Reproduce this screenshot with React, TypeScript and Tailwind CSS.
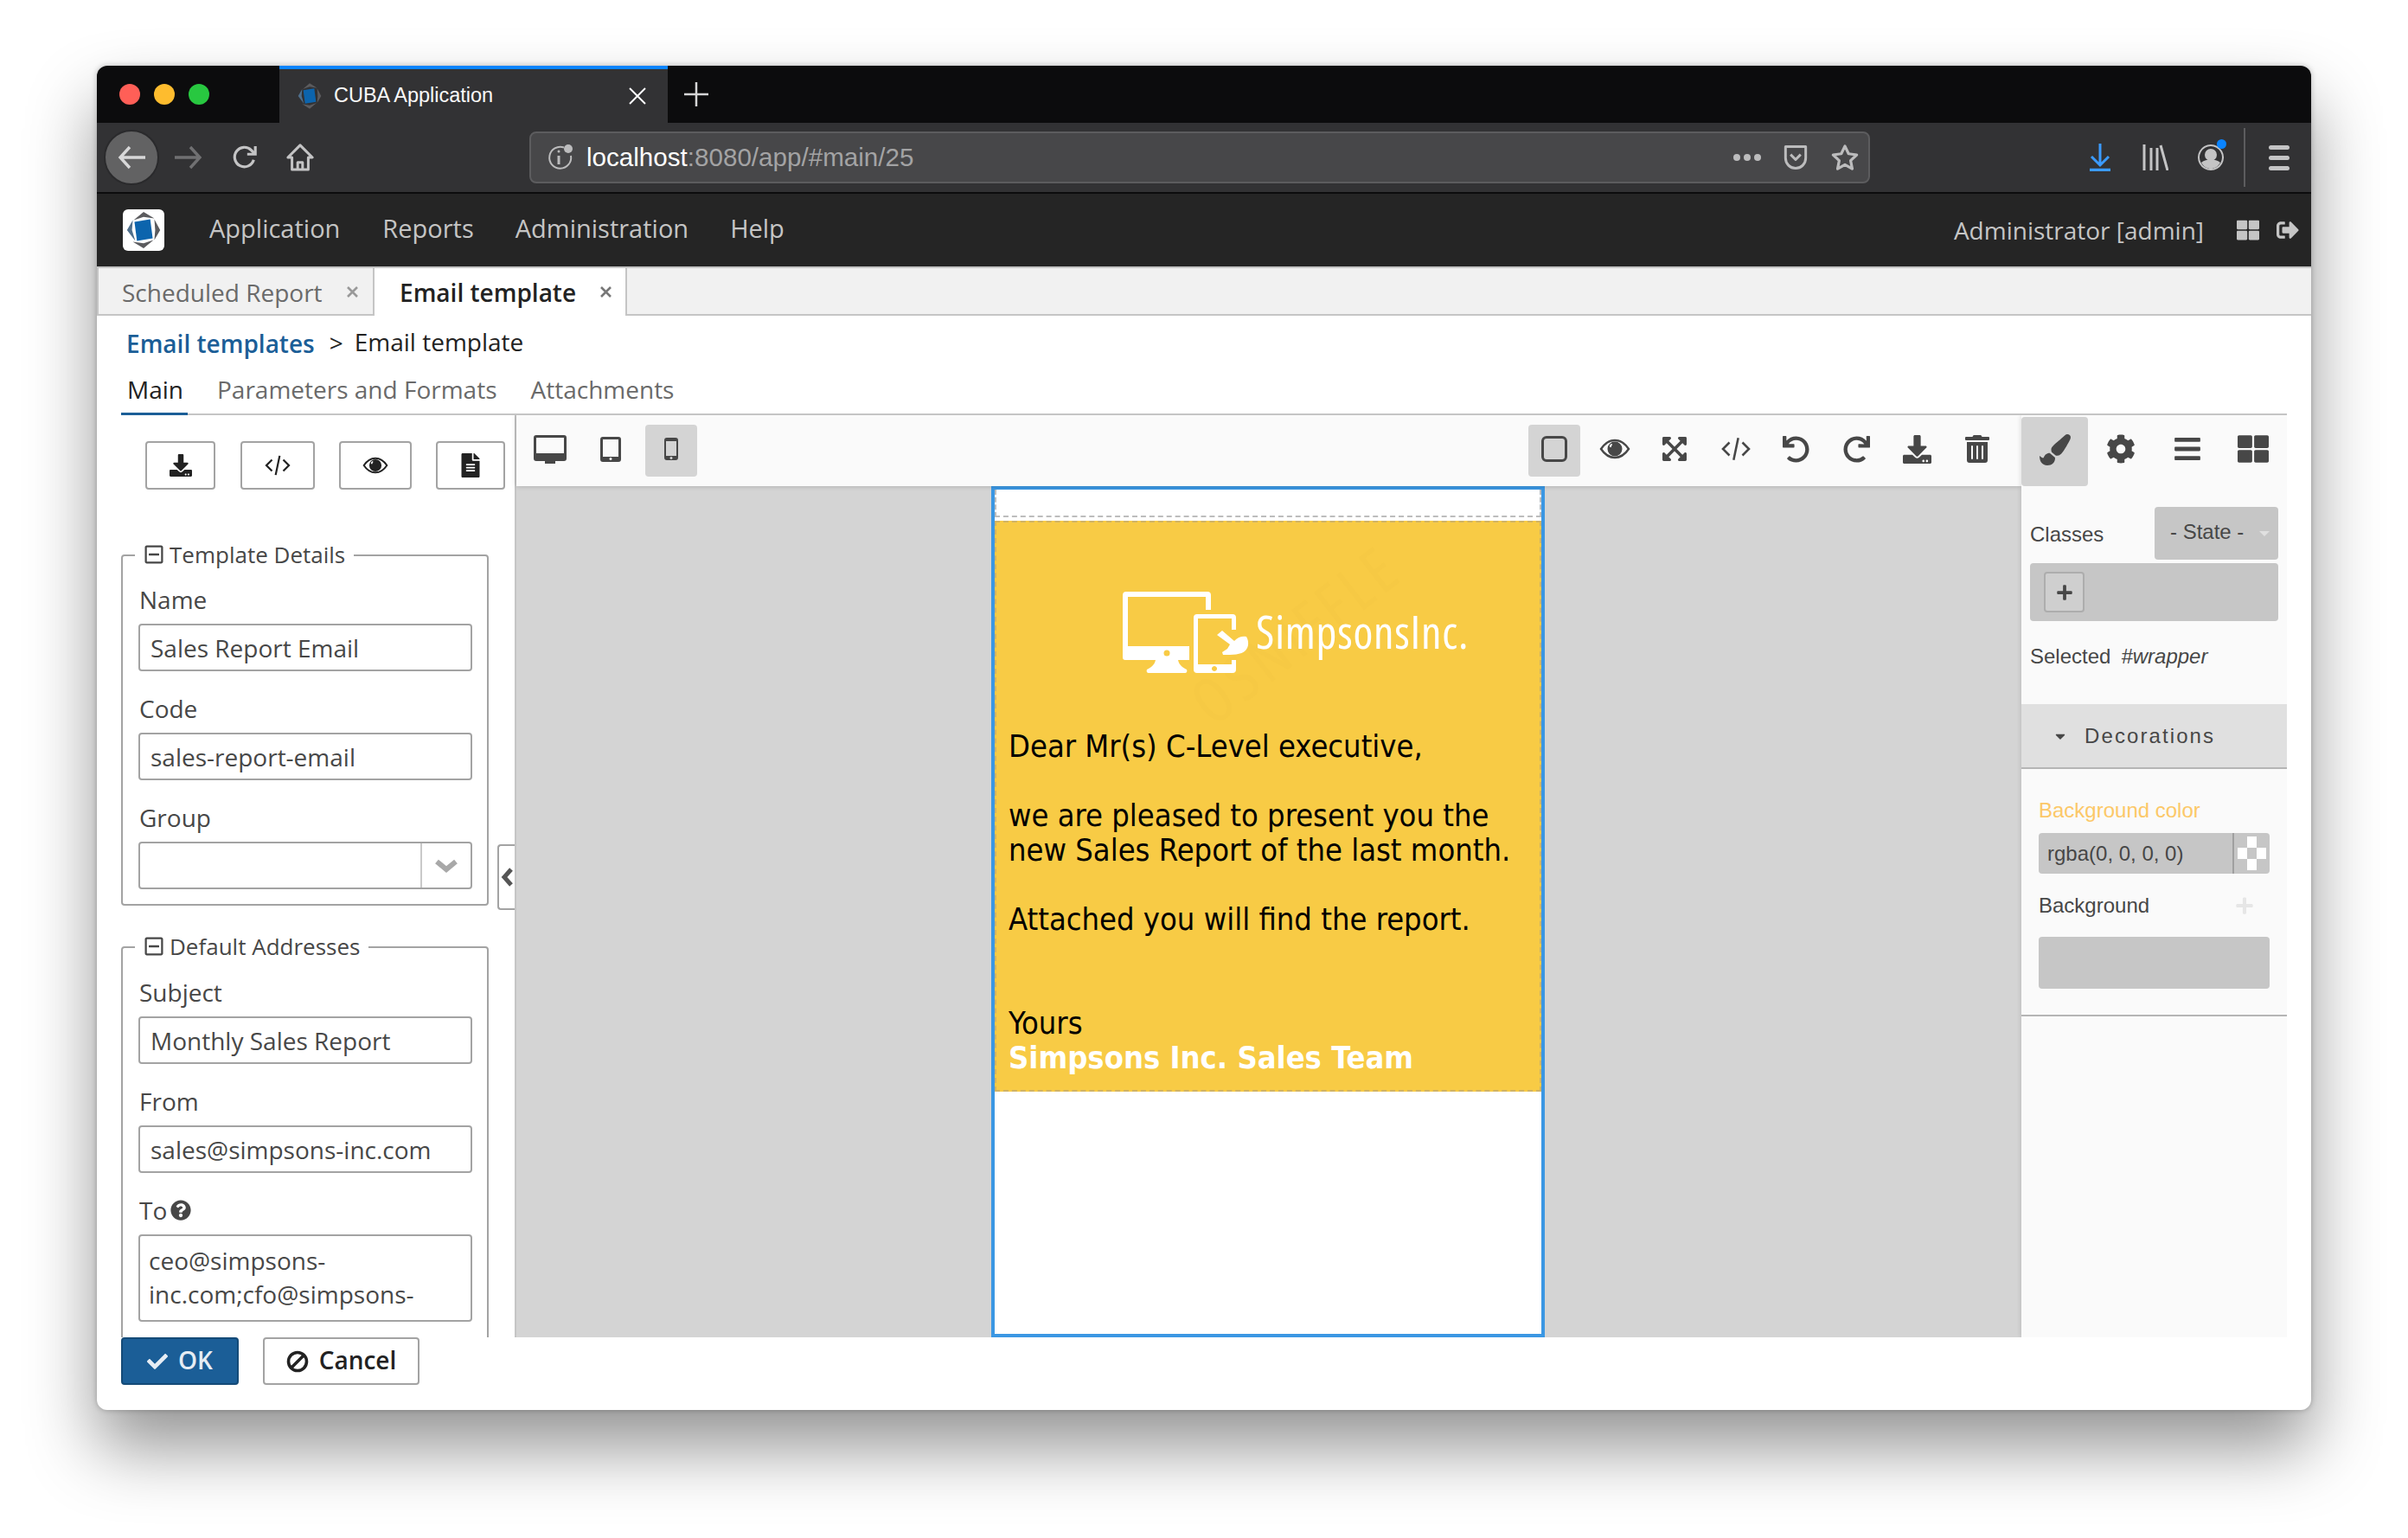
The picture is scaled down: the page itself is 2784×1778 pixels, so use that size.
import React from "react";
import {
  FaDownload, FaFileAlt, FaExpandArrowsAlt, FaUndo, FaRedo, FaTrashAlt, FaPaintBrush, FaCog, FaBars,
  FaThLarge, FaCheck, FaQuestionCircle, FaRegMinusSquare, FaSignOutAlt, FaPlus, FaCaretDown,
} from "react-icons/fa";

function CodeIcon({ className }: { className?: string }) {
  return (
    <svg viewBox="0 0 32 28" className={className} fill="none" stroke="currentColor" strokeWidth="2.4">
      <path d="M9 7 2 14l7 7M23 7l7 7-7 7M18.5 2l-5 24" />
    </svg>
  );
}

function EyeIcon({ className }: { className?: string }) {
  return (
    <svg viewBox="0 0 36 26" className={className} fill="currentColor">
      <path d="M2 13C7 5.5 12 3 18 3s11 2.500 16 10c-5 7.500-10 10-16 10S7 20.500 2 13Z" fill="none" stroke="currentColor" strokeWidth="2.4" />
      <path fillRule="evenodd" d="M18 4.500a8.500 8.500 0 1 1 0 17 8.500 8.500 0 0 1 0-17Zm-3.500 2.500a3.500 3.500 0 0 0-2.500 4h2a2 2 0 0 1 1-2.500Z" />
    </svg>
  );
}

function CubaLogo({ className }: { className?: string }) {
  return (
    <svg viewBox="0 0 48 48" className={className}>
      <path d="M24 2 37 10 24 8 12 12Z" fill="#5b5b5e" />
      <path d="M24 46 11 38 24 40 36 36Z" fill="#5b5b5e" />
      <path d="M4 24 11 12 10 24 14 37Z" fill="#4f6f8c" />
      <path d="M44 24 37 11 38 24 37 36Z" fill="#5b5b5e" />
      <path d="M13 14 32 11 35 34 16 37Z" fill="#0c64ad" />
    </svg>
  );
}

function PocketIcon({ className }: { className?: string }) {
  return (
    <svg viewBox="0 0 32 36" className={className} fill="none" stroke="currentColor" strokeWidth="3.6" strokeLinejoin="round">
      <path d="M2 3h28v16a14 14 0 0 1-28 0Z" />
      <path d="m9 14 7 7 7-7" />
    </svg>
  );
}

function DeviceLogo({ className }: { className?: string }) {
  return (
    <svg viewBox="0 0 148 96" className={className} fill="white">
      {/* monitor */}
      <path fillRule="evenodd" d="M4 0h94a4 4 0 0 1 4 4v17h-6V6H6v57h71v16H3a3 3 0 0 1-3-3V4a4 4 0 0 1 4-4Z" />
      <circle cx="51" cy="71" r="3.5" fill="#f8cb45" />
      <path d="M38 79h26c1 6 6 9 10 11 1 2 0 4-2 4H30c-2 0-3-2-2-4 4-2 9-5 10-11Z" />
      {/* phone */}
      <path fillRule="evenodd" d="M86 26h41a4 4 0 0 1 4 4v14h-5V31H87v53h39v-5h5v11a4 4 0 0 1-4 4H86a4 4 0 0 1-4-4V30a4 4 0 0 1 4-4Zm20 60a3 3 0 1 0 .01 0Z" />
      {/* hand */}
      <path d="M109 50l6-5 14 12c4-5 10-6 14-5 3 5 3 12-1 16-5 5-15 5-26 5l-1-3 6-4 3-5Z" />
    </svg>
  );
}

function DesktopIcon({ className }: { className?: string }) {
  return (
    <svg viewBox="0 0 38 33" className={className} fill="currentColor">
      <path fillRule="evenodd" d="M3 0h32a3 3 0 0 1 3 3v24a3 3 0 0 1-3 3H25v3H13v-3H3a3 3 0 0 1-3-3V3a3 3 0 0 1 3-3Zm0 3v18h32V3Z" />
    </svg>
  );
}

function TabletIcon({ className }: { className?: string }) {
  return (
    <svg viewBox="0 0 24 29" className={className} fill="currentColor">
      <path fillRule="evenodd" d="M3 0h18a3 3 0 0 1 3 3v23a3 3 0 0 1-3 3H3a3 3 0 0 1-3-3V3a3 3 0 0 1 3-3Zm0 3v20h18V3Zm9 21a1.500 1.500 0 1 0 .01 0Z" />
    </svg>
  );
}

function PhoneIcon({ className }: { className?: string }) {
  return (
    <svg viewBox="0 0 16 26" className={className} fill="currentColor">
      <path fillRule="evenodd" d="M3 0h10a3 3 0 0 1 3 3v20a3 3 0 0 1-3 3H3a3 3 0 0 1-3-3V3a3 3 0 0 1 3-3Zm-1 4v17h12V4Zm6 18a1.500 1.500 0 1 0 .01 0Z" />
    </svg>
  );
}

function BanIcon({ className }: { className?: string }) {
  return (
    <svg viewBox="0 0 26 26" className={className} fill="none" stroke="currentColor" strokeWidth="3.6">
      <circle cx="13" cy="13" r="10.5" />
      <path d="M5.500 20.500 20.500 5.500" />
    </svg>
  );
}

function CloseX({ color }: { color: string }) {
  return (
    <svg viewBox="0 0 13 13" className="w-[13px] h-[13px] ml-[28px]" stroke={color} strokeWidth="2.6">
      <path d="M1 1l11 11M12 1 1 12" />
    </svg>
  );
}

function Legend({ title }: { title: string }) {
  return (
    <div className="absolute top-[-21px] left-[14px] bg-white px-[10px] h-[38px] flex items-center gap-[6px] text-[#474747] text-[26px] whitespace-nowrap">
      <FaRegMinusSquare className="w-[24px] h-[24px]" />
      <span>{title}</span>
    </div>
  );
}

function FieldLabel({ children }: { children: React.ReactNode }) {
  return <div className="h-[36px] mb-[10px] flex items-center gap-[6px] pl-px text-[28px] text-[#474747] leading-none">{children}</div>;
}

function TextField({ label, value }: { label: string; value: string }) {
  return (
    <div className="flex flex-col">
      <FieldLabel>{label}</FieldLabel>
      <div className="h-[55px] border-2 border-[#a3a3a3] rounded-[4px] flex items-center pl-[12px] text-[28px] text-[#474747] whitespace-nowrap">{value}</div>
    </div>
  );
}

function PaneButton({ className, children }: { className: string; children: React.ReactNode }) {
  return <div className={`h-[56px] border-2 border-[#a3a3a3] rounded-[4px] flex items-center justify-center text-[#222] ${className}`}>{children}</div>;
}

export default function App() {
  return (
    <div className="w-[2784px] h-[1778px] bg-white pt-[76px] pl-[112px] overflow-hidden font-['Open_Sans',sans-serif]">
      <div className="w-[2560px] h-[1554px] rounded-[12px] overflow-hidden flex flex-col bg-white shadow-[0_44px_80px_rgba(0,0,0,0.42),0_0_6px_rgba(0,0,0,0.25)]">
        {/* browser tab strip */}
        <div className="h-[66px] bg-[#0c0c0d] flex shrink-0">
          <div className="w-[211px] pl-[26px] flex items-center gap-[16px]">
            <span className="w-[24px] h-[24px] rounded-full bg-[#ff5f57]" />
            <span className="w-[24px] h-[24px] rounded-full bg-[#febc2e]" />
            <span className="w-[24px] h-[24px] rounded-full bg-[#28c840]" />
          </div>
          <div className="w-[449px] bg-[#323234] border-t-4 border-[#0a84ff] flex items-center pl-[19px] pr-[25px] font-['Liberation_Sans',sans-serif] text-[23.5px] text-[#f9f9fa]">
            <CubaLogo className="w-[32px] h-[32px]" />
            <span className="ml-[12px] flex-1 whitespace-nowrap">CUBA Application</span>
            <svg viewBox="0 0 20 20" className="w-[20px] h-[20px]" stroke="#f9f9fa" strokeWidth="2"><path d="M1 1l18 18M19 1 1 19" /></svg>
          </div>
          <div className="flex items-center pl-[19px]">
            <svg viewBox="0 0 28 28" className="w-[28px] h-[28px]" stroke="#d6d6d7" strokeWidth="2.5"><path d="M14 0v28M0 14h28" /></svg>
          </div>
        </div>
        {/* browser toolbar */}
        <div className="h-[82px] bg-[#323234] border-b-2 border-[#0c0c0d] flex items-center shrink-0 text-[#c4c4c5]">
          <div className="w-[64px] h-[64px] ml-[8px] rounded-full bg-[#626263] border-2 border-[#2a2a2c] flex items-center justify-center">
            <svg viewBox="0 0 32 28" className="w-[32px] h-[28px]" fill="none" stroke="#d8d8d9" strokeWidth="3.4"><path d="M14 2 3 14l11 12M3 14h29" /></svg>
          </div>
          <svg viewBox="0 0 32 28" className="w-[32px] h-[28px] ml-[18px]" fill="none" stroke="#707072" strokeWidth="3.4"><path d="m18 2 11 12-11 12M29 14H0" /></svg>
          <svg viewBox="0 0 32 32" className="w-[30px] h-[30px] ml-[34px]" fill="none" stroke="currentColor" strokeWidth="3.4"><path d="M27 19a12 12 0 1 1-3-12l4 4" /><path d="M29 2v10H19" /></svg>
          <svg viewBox="0 0 34 34" className="w-[32px] h-[32px] ml-[33px]" fill="none" stroke="currentColor" strokeWidth="3.2" strokeLinejoin="round"><path d="M2 17 17 2l15 15h-5v15H7V17Z" /><path d="M14 32v-9h6v9" /></svg>
          <div className="w-[1550px] h-[60px] ml-[249px] bg-[#474749] border-2 border-[#5c5c5e] rounded-[8px] flex items-center pl-[18px] pr-[10px] font-['Liberation_Sans',sans-serif] text-[29.6px]">
            <svg viewBox="0 0 32 32" className="w-[32px] h-[32px]" fill="none" stroke="#bcbcbd" strokeWidth="2"><path d="M20 4.500A12.500 12.500 0 1 0 28 14" /><path d="M14 14v10" strokeWidth="3" /><circle cx="14" cy="9" r="1.5" fill="#bcbcbd" stroke="none" /><circle cx="25" cy="6" r="5" fill="#bcbcbd" stroke="none" /></svg>
            <span className="ml-[14px] text-white whitespace-nowrap">localhost<span className="text-[#a3a3a4]">:8080/app/#main/25</span></span>
            <span className="ml-auto flex gap-[4px]"><i className="w-[8px] h-[8px] rounded-full bg-[#bcbcbd]" /><i className="w-[8px] h-[8px] rounded-full bg-[#bcbcbd]" /><i className="w-[8px] h-[8px] rounded-full bg-[#bcbcbd]" /></span>
            <PocketIcon className="w-[32px] h-[30px] ml-[24px] text-[#bcbcbd]" />
            <svg viewBox="0 0 34 34" className="w-[34px] h-[32px] ml-[24px]" fill="none" stroke="#bcbcbd" strokeWidth="3.4" strokeLinejoin="round"><path d="m17 3 4.500 9.500 10 1.300-7.500 7 2 10.200-9-5.200-9 5.200 2-10.200-7.500-7 10-1.300Z" /></svg>
          </div>
          <svg viewBox="0 0 24 32" className="w-[24px] h-[32px] ml-[254px]" fill="none" stroke="#3b9bff" strokeWidth="3"><path d="M12 0v25M2 15l10 10 10-10" /><path d="M0 30.500h24" strokeWidth="3.6" /></svg>
          <svg viewBox="0 0 30 30" className="w-[30px] h-[30px] ml-[37px]" fill="none" stroke="#c4c4c5" strokeWidth="3"><path d="M2 0v30M10 4v26M17 4v26M21 1l8 29" /></svg>
          <div className="relative ml-[34px]">
            <svg viewBox="0 0 30 32" className="w-[30px] h-[32px]" fill="#c4c4c5"><path d="M15 1a15 15 0 1 0 .01 0Zm0 2a13 13 0 1 1-.01 0Z" /><circle cx="15" cy="13" r="7" /><path d="M4 22c3-3 7-3.500 11-3.500s8 .5 11 3.500c-3 5-7 7-11 7s-8-2-11-7Z" /></svg>
            <span className="absolute w-[11px] h-[11px] rounded-full bg-[#0a84ff] top-[-5px] right-[-3px]" />
          </div>
          <div className="w-[2px] h-[68px] bg-[#5c5c5e] ml-[23px]" />
          <div className="ml-[27px] flex flex-col gap-[7px]">
            <i className="block w-[24px] h-[5px] rounded-sm bg-[#c4c4c5]" />
            <i className="block w-[24px] h-[5px] rounded-sm bg-[#c4c4c5]" />
            <i className="block w-[24px] h-[5px] rounded-sm bg-[#c4c4c5]" />
          </div>
        </div>
        {/* app menu */}
        <div className="h-[84px] bg-[#252525] flex items-center shrink-0 text-[29px] text-[#c5c5c5] font-medium">
          <div className="w-[48px] h-[48px] ml-[30px] bg-white rounded-[6px] flex items-center justify-center"><CubaLogo className="w-[46px] h-[46px]" /></div>
          <span className="ml-[52px] mb-[4px]">Application</span>
          <span className="ml-[49px] mb-[4px]">Reports</span>
          <span className="ml-[48px] mb-[4px]">Administration</span>
          <span className="ml-[48px] mb-[4px]">Help</span>
          <span className="ml-auto text-[28px] font-normal">Administrator [admin]</span>
          <FaThLarge className="w-[26px] h-[26px] ml-[38px]" />
          <FaSignOutAlt className="w-[26px] h-[26px] ml-[20px] mr-[14px]" />
        </div>
        {/* app tabs */}
        <div className="h-[57px] bg-[#f1f1f1] border-y-2 border-[#c5c5c5] flex shrink-0 text-[28px] whitespace-nowrap">
          <div className="w-[321px] h-[55px] border-l-2 border-r-2 border-[#c5c5c5] flex items-center pl-[27px] text-[#6a6a6a]">
            <span>Scheduled Report</span>
            <CloseX color="#999" />
          </div>
          <div className="w-[292px] h-[55px] bg-white border-r-2 border-[#c5c5c5] flex items-center pl-[29px] text-[#222] font-semibold">
            <span>Email template</span>
            <CloseX color="#777" />
          </div>
        </div>
        {/* screen */}
        <div className="flex-1 flex flex-col min-h-0">
          <div className="h-[67px] pb-[6px] flex items-center pl-[34px] text-[28px] shrink-0 whitespace-nowrap">
            <span className="font-semibold text-[#1b5e97] mt-[2px]">Email templates</span>
            <span className="ml-[17px] text-[#222]">&gt;</span>
            <span className="ml-[13px] text-[#222] mt-[-2px]">Email template</span>
          </div>
          <div className="h-[48px] mx-[28px] border-b-2 border-[#c5c5c5] flex text-[28px] text-[#6a6a6a] shrink-0 whitespace-nowrap">
            <div className="h-[48px] w-[77px] pl-[7px] border-b-[3px] border-[#1b5e97] text-[#222] leading-[36px]">Main</div>
            <div className="ml-[34px] leading-[36px]">Parameters and Formats</div>
            <div className="ml-[39px] leading-[36px]">Attachments</div>
          </div>
          <div className="h-[1066px] mx-[28px] flex shrink-0 overflow-hidden">
            {/* left pane */}
            <div className="w-[455px] shrink-0 relative">
              <div className="pt-[30px] pl-[28px] flex">
                <PaneButton className="w-[81px]"><FaDownload className="w-[26px] h-[26px]" /></PaneButton>
                <PaneButton className="w-[86px] ml-[29px]"><CodeIcon className="w-[30px] h-[26px]" /></PaneButton>
                <PaneButton className="w-[84px] ml-[28px]"><EyeIcon className="w-[30px] h-[22px]" /></PaneButton>
                <PaneButton className="w-[80px] ml-[28px]"><FaFileAlt className="w-[24px] h-[28px]" /></PaneButton>
              </div>
              <div className="relative w-[425px] h-[406px] mt-[75px] border-2 border-[#a3a3a3] rounded-[4px] pl-[18px] pr-[17px] pt-[32px]">
                <Legend title="Template Details" />
                <div className="flex flex-col gap-[25px]">
                  <TextField label="Name" value="Sales Report Email" />
                  <TextField label="Code" value="sales-report-email" />
                  <div className="flex flex-col">
                    <FieldLabel>Group</FieldLabel>
                    <div className="h-[55px] border-2 border-[#a3a3a3] rounded-[4px] flex justify-end">
                      <div className="w-[58px] border-l-2 border-[#c9c9c9] flex items-center justify-center text-[#a8a8a8]">
                        <svg viewBox="0 0 26 16" className="w-[26px] h-[16px]" fill="none" stroke="currentColor" strokeWidth="6"><path d="m2 3 11 9 11-9" /></svg>
                      </div>
                    </div>
                  </div>
                </div>
              </div>
              <div className="relative w-[425px] h-[500px] mt-[47px] border-2 border-[#a3a3a3] rounded-[4px] pl-[18px] pr-[17px] pt-[33px]">
                <Legend title="Default Addresses" />
                <div className="flex flex-col gap-[25px]">
                  <TextField label="Subject" value="Monthly Sales Report" />
                  <TextField label="From" value="sales@simpsons-inc.com" />
                  <div className="flex flex-col">
                    <FieldLabel>To <FaQuestionCircle className="w-[24px] h-[24px] ml-[-2px]" /></FieldLabel>
                    <div className="h-[101px] border-2 border-[#a3a3a3] rounded-[4px] pl-[10px] pt-[9px] text-[28px] leading-[39px] text-[#474747] whitespace-nowrap">ceo@simpsons-<br />inc.com;cfo@simpsons-</div>
                  </div>
                </div>
              </div>
              <div className="absolute left-[435px] top-[496px] w-[20px] h-[76px] border-2 border-r-0 border-[#a3a3a3] rounded-l-[4px] bg-white flex items-center justify-center text-[#555]">
                <svg viewBox="0 0 14 22" className="w-[14px] h-[22px]" fill="none" stroke="currentColor" strokeWidth="5"><path d="M12 2 4 11l8 9" /></svg>
              </div>
            </div>
            {/* editor */}
            <div className="flex-1 border-l-2 border-[#c5c5c5] flex flex-col min-w-0">
              <div className="h-[82px] bg-[#fafafa] shadow-[0_0_6px_rgba(0,0,0,0.2)] flex items-center shrink-0 relative text-[#474747]">
                <DesktopIcon className="w-[38px] h-[33px] ml-[20px] mb-[4px]" />
                <TabletIcon className="w-[24px] h-[29px] ml-[39px] mb-[4px]" />
                <div className="w-[60px] h-[60px] ml-[28px] rounded-[4px] bg-[#d4d4d4] flex items-center justify-center"><PhoneIcon className="w-[16px] h-[26px] mb-[4px]" /></div>
                <div className="w-[60px] h-[60px] ml-[961px] rounded-[4px] bg-[#d4d4d4] flex items-center justify-center">
                  <div className="w-[30px] h-[30px] mb-[4px] border-[3px] border-[#474747] rounded-[6px]" />
                </div>
                <EyeIcon className="w-[36px] h-[26px] ml-[22px] mb-[4px]" />
                <FaExpandArrowsAlt className="w-[32px] h-[32px] ml-[35px] mb-[4px]" />
                <CodeIcon className="w-[36px] h-[30px] ml-[37px] mb-[4px]" />
                <FaUndo className="w-[31px] h-[31px] ml-[36px] mb-[4px]" />
                <FaRedo className="w-[31px] h-[31px] ml-[39px] mb-[4px]" />
                <FaDownload className="w-[33px] h-[33px] ml-[38px] mb-[4px]" />
                <FaTrashAlt className="w-[28px] h-[32px] ml-[39px] mb-[4px]" />
              </div>
              <div className="flex-1 bg-[#d4d4d4] flex justify-center pr-[2px]">
                <div className="w-[640px] h-[984px] border-4 border-[#3b97e3] bg-white flex flex-col">
                  <div className="h-[32px] border-x-2 border-b-2 border-dashed border-[#bdbdbd]" />
                  <div className="h-[660px] relative bg-[#f8cb45] mt-[4px] border-2 border-dashed border-[#d1b364] pl-[14px] text-[36px] leading-[40px] text-black font-['DejaVu_Sans',sans-serif] [font-stretch:condensed] flex flex-col overflow-hidden">
                    {/* faint watermark across the email */}
                    <span className="absolute left-[345px] top-[128px] -translate-x-1/2 -translate-y-1/2 -rotate-[38deg] text-[72px] leading-none tracking-[6px] text-[#f6c944] font-['Open_Sans',sans-serif] whitespace-nowrap">OSNIFFLE</span>
                    <div className="relative flex items-start pl-[132px] pt-[80px] h-[239px]">
                      <DeviceLogo className="w-[148px] h-[96px] shrink-0" />
                      <span className="ml-[6px] mt-[14px] text-[52px] leading-[64px] tracking-[0.8px] text-white font-['Open_Sans',sans-serif] font-normal [font-stretch:82%] whitespace-nowrap">SimpsonsInc.</span>
                    </div>
                    <div className="relative">Dear Mr(s) C-Level executive,</div>
                    <div className="relative mt-[40px]">we are pleased to present you the</div>
                    <div className="relative">new Sales Report of the last month.</div>
                    <div className="relative mt-[40px]">Attached you will find the report.</div>
                    <div className="relative mt-[80px]">Yours</div>
                    <div className="relative font-bold text-white">Simpsons Inc. Sales Team</div>
                  </div>
                </div>
              </div>
            </div>
            {/* style panel */}
            <div className="w-[307px] shrink-0 bg-[#fafafa] shadow-[-2px_0_4px_rgba(0,0,0,0.08)] relative flex flex-col font-['Liberation_Sans',sans-serif] text-[24px] text-[#474747]">
              <div className="h-[84px] flex items-start shrink-0 pt-[2px] text-[#474747]">
                <div className="w-[77px] h-[80px] rounded-[4px] bg-[#d2d2d2] flex items-center justify-center"><FaPaintBrush className="w-[36px] h-[36px] mb-[4px]" /></div>
                <FaCog className="w-[34px] h-[34px] ml-[21px] mt-[20px]" />
                <FaBars className="w-[34px] h-[34px] ml-[43px] mt-[20px]" />
                <FaThLarge className="w-[36px] h-[36px] ml-[41px] mt-[19px]" />
              </div>
              <div className="pl-[10px] pr-[10px]">
                <div className="h-[61px] mt-[22px] flex items-center justify-between">
                  <span className="mt-[2px]">Classes</span>
                  <div className="w-[143px] h-[61px] rounded-[4px] bg-[#c6c6c6] flex items-center pl-[18px] pr-[10px]">
                    <span className="mb-[3px]">- State -</span>
                    <span className="ml-auto w-0 h-0 border-x-[6px] border-x-transparent border-t-[6px] border-t-[#e0e0e0]" />
                  </div>
                </div>
                <div className="h-[67px] mt-[4px] rounded-[4px] bg-[#c6c6c6] pl-[16px] flex items-center">
                  <div className="w-[47px] h-[47px] border-2 border-[#adadad] rounded-[4px] bg-[#cfcfcf] flex items-center justify-center"><FaPlus className="w-[20px] h-[20px]" /></div>
                </div>
                <div className="h-[82px] flex items-center gap-[12px]"><span>Selected</span><i>#wrapper</i></div>
              </div>
              <div className="h-[75px] mt-[14px] bg-[#e0e0e0] border-b-2 border-[#b5b5b5] flex items-center pl-[36px] tracking-[2.1px] shrink-0">
                <FaCaretDown className="w-[18px] h-[18px]" />
                <span className="ml-[19px]">Decorations</span>
              </div>
              <div className="h-[286px] border-b-2 border-[#b5b5b5] px-[20px] shrink-0">
                <div className="h-[47px] mt-[24px] mb-[3px] text-[#fcc868] flex items-center">Background color</div>
                <div className="h-[47px] rounded-[4px] bg-[#c6c6c6] flex items-center pl-[10px]">
                  <span className="flex-1">rgba(0, 0, 0, 0)</span>
                  <div className="w-[43px] h-[47px] border-l-2 border-[#a0a0a0] p-[4px]">
                    <div className="w-full h-full grid grid-cols-3 grid-rows-3 rounded-[2px] overflow-hidden">
                      <i className="bg-[#c6c6c6]" /><i className="bg-white" /><i className="bg-[#c6c6c6]" />
                      <i className="bg-white" /><i className="bg-[#c6c6c6]" /><i className="bg-white" />
                      <i className="bg-[#c6c6c6]" /><i className="bg-white" /><i className="bg-[#c6c6c6]" />
                    </div>
                  </div>
                </div>
                <div className="h-[73px] flex items-center justify-between pr-[18px]"><span>Background</span><FaPlus className="w-[22px] h-[22px] text-[#e6e6e6]" /></div>
                <div className="h-[60px] rounded-[4px] bg-[#c6c6c6]" />
              </div>
            </div>
          </div>
          <div className="h-[55px] ml-[28px] flex text-[28px] font-semibold shrink-0">
            <div className="w-[136px] h-[55px] pb-[3px] bg-[#1b5e97] border-2 border-[#144a77] rounded-[4px] flex items-center justify-center gap-[12px] text-[#e6edf4]"><FaCheck className="w-[24px] h-[24px] mt-[3px]" />OK</div>
            <div className="w-[181px] h-[55px] pb-[3px] ml-[28px] border-2 border-[#a3a3a3] rounded-[4px] flex items-center justify-center gap-[12px] text-[#222]"><BanIcon className="w-[26px] h-[26px] mt-[3px]" />Cancel</div>
          </div>
        </div>
      </div>
    </div>
  );
}
